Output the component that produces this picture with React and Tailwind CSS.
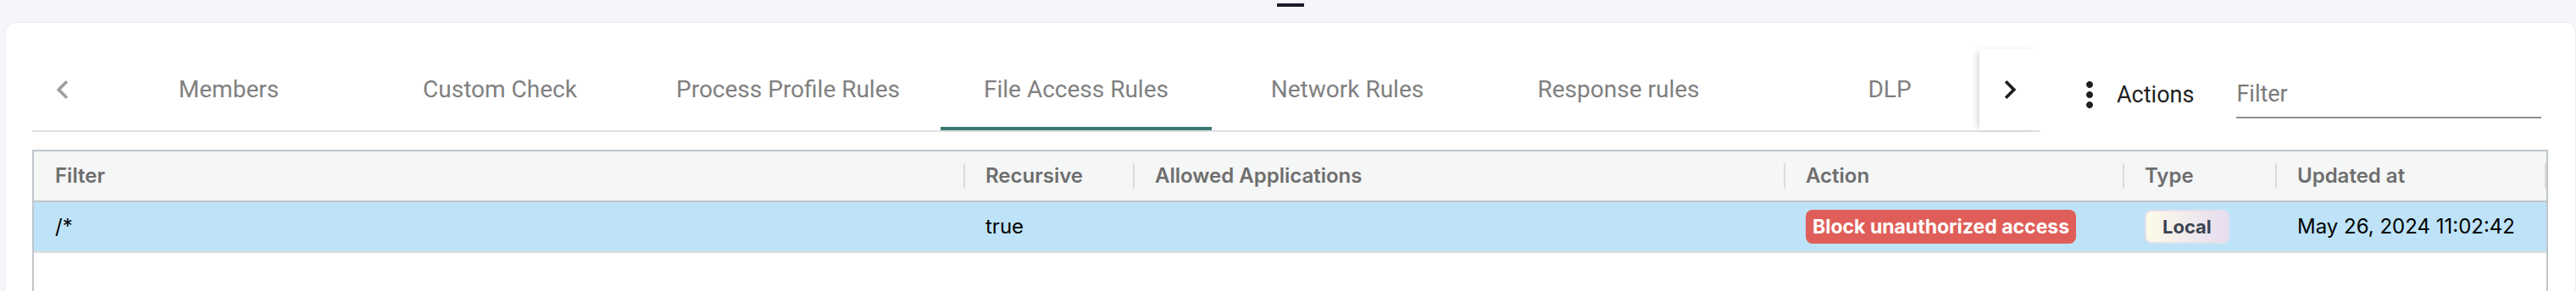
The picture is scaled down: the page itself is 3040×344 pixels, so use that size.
import React from 'react';

const tabs = [
  { label: 'Members', width: 'w-[320px]' },
  { label: 'Custom Check', width: 'w-[320px]' },
  { label: 'Process Profile Rules', width: 'w-[360px]' },
  { label: 'File Access Rules', width: 'w-[320px]' },
  { label: 'Network Rules', width: 'w-[320px]' },
  { label: 'Response rules', width: 'w-[320px]' },
  { label: 'DLP', width: 'w-[320px]' },
];

const columns = [
  { label: 'Filter', width: 'w-[1099px]', pad: 'pl-[25px]' },
  { label: 'Recursive', width: 'w-[200px]', pad: 'pl-[24px]' },
  { label: 'Allowed Applications', width: 'w-[768px]', pad: 'pl-[24px]' },
  { label: 'Action', width: 'w-[400px]', pad: 'pl-[24px]' },
  { label: 'Type', width: 'w-[180px]', pad: 'pl-[24px]' },
  { label: 'Updated at', width: 'w-[318px]', pad: 'pl-[24px]' },
];

function ChevronLeft({ className }) {
  return (
    <svg viewBox="0 0 24 24" width="44" height="44" className={className} fill="currentColor">
      <path d="M15.41 16.59 10.83 12l4.58-4.59L14 6l-6 6 6 6z" />
    </svg>
  );
}

function ChevronRight({ className }) {
  return (
    <svg viewBox="0 0 24 24" width="44" height="44" className={className} fill="currentColor">
      <path d="M8.59 16.59 13.17 12 8.59 7.41 10 6l6 6-6 6z" />
    </svg>
  );
}

function MoreVert() {
  return (
    <svg viewBox="0 0 24 24" width="48" height="48" fill="#1f1f1f">
      <path d="M12 8c1.1 0 2-.9 2-2s-.9-2-2-2-2 .9-2 2 .9 2 2 2m0 2c-1.1 0-2 .9-2 2s.9 2 2 2 2-.9 2-2-.9-2-2-2m0 6c-1.1 0-2 .9-2 2s.9 2 2 2 2-.9 2-2-.9-2-2-2" />
    </svg>
  );
}

function Tabs() {
  const active = 'File Access Rules';
  return (
    <div className="flex h-[98px] w-[2370px] shrink-0 border-b-2 border-[#e0e0e0]">
      {/* left scroll button (disabled) */}
      <div className="flex h-[96px] w-[72px] shrink-0 items-center justify-center">
        <ChevronLeft className="text-[#9e9e9e]" />
      </div>

      <div className="flex flex-1 overflow-hidden">
        {tabs.map((t) => (
          <div
            key={t.label}
            className={`relative flex h-[96px] shrink-0 items-center justify-center whitespace-nowrap text-[28px] text-[#808080] [font-family:Roboto,sans-serif] ${t.width}`}
          >
            {t.label}
            {t.label === active && (
              <div className="absolute bottom-0 left-0 h-[4px] w-full bg-[#3a7672]" />
            )}
          </div>
        ))}
      </div>

      {/* right scroll button */}
      <div className="relative z-10 flex h-[96px] w-[72px] shrink-0 items-center justify-center bg-white shadow-[-5px_0_8px_-3px_rgba(0,0,0,0.18)]">
        <ChevronRight className="text-[#1f1f1f]" />
      </div>
    </div>
  );
}

export default function App() {
  return (
    <div className="h-[344px] w-[3040px] overflow-hidden bg-[#f5f6fa]">
      {/* top handle */}
      <div className="flex h-[26px]">
        <div className="ml-[1507px] mt-[4px] h-[4px] w-[32px] bg-[#1b1b2a]" />
      </div>

      {/* card */}
      <div className="ml-[6px] h-[400px] rounded-t-[12px] border border-[#eceef2] bg-white pl-[31px] pt-[31px]">
        {/* toolbar */}
        <div className="flex items-start">
          <Tabs />

          <div className="ml-[34px] mt-[26px] flex h-[56px] items-center">
            <MoreVert />
            <span className="ml-[8px] text-[27px] text-[#1f1f1f] [font-family:Roboto,sans-serif]">
              Actions
            </span>
            <input
              type="text"
              placeholder="Filter"
              className="ml-[50px] h-[56px] w-[360px] border-b-2 border-[#8e8e8e] bg-transparent text-[27px] text-[#1f1f1f] outline-none placeholder:text-[#7a7a7a] [font-family:Roboto,sans-serif]"
            />
          </div>
        </div>

        {/* table */}
        <div className="mt-[21px] h-[300px] w-[2969px] border-2 border-b-0 border-[#bfc6cc] [font-family:Inter,sans-serif]">
          {/* header */}
          <div className="flex h-[60px] border-b-2 border-[#bfc6cc] bg-[#f5f6f6]">
            {columns.map((c) => (
              <div
                key={c.label}
                className={`flex h-full shrink-0 items-center justify-between ${c.width} ${c.pad}`}
              >
                <span className="text-[24px] font-semibold text-[#6e6e6e]">{c.label}</span>
                <div className="h-[30px] w-[2px] bg-[#dcdcdc]" />
              </div>
            ))}
          </div>

          {/* row */}
          <div className="flex h-[60px] border-b-2 border-[#dcdcdc] bg-[#bee3f8] text-[24px] text-black">
            <div className={`flex shrink-0 items-center ${columns[0].width} ${columns[0].pad}`}>/*</div>
            <div className={`flex shrink-0 items-center ${columns[1].width} ${columns[1].pad}`}>true</div>
            <div className={`flex shrink-0 items-center ${columns[2].width} ${columns[2].pad}`}></div>
            <div className={`flex shrink-0 items-center ${columns[3].width} ${columns[3].pad}`}>
              <span className="flex h-[40px] items-center rounded-[8px] bg-[#e05e59] px-[8px] text-[23px] font-bold text-white">
                Block unauthorized access
              </span>
            </div>
            <div className={`flex shrink-0 items-center ${columns[4].width} ${columns[4].pad}`}>
              <span className="flex h-[40px] items-center rounded-[8px] border-2 border-[#e4e0ea] bg-gradient-to-r from-[#fdfbe9] to-[#e6dcef] px-[19px] text-[22px] font-bold text-[#3b4452]">
                Local
              </span>
            </div>
            <div className={`flex shrink-0 items-center ${columns[5].width} ${columns[5].pad}`}>
              May 26, 2024 11:02:42
            </div>
          </div>
        </div>
      </div>
    </div>
  );
}
